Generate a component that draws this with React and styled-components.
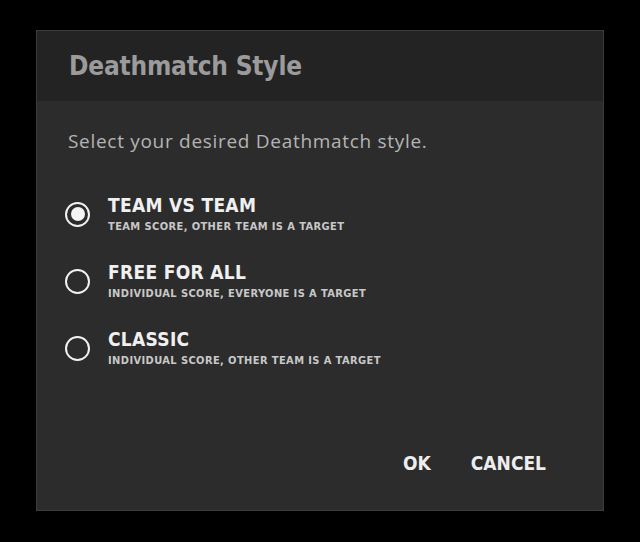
import React, { useState } from 'react';
import styled, { createGlobalStyle } from 'styled-components';

const GlobalStyle = createGlobalStyle`
    html, body {
        margin: 0;
        padding: 0;
        background: #000;
    }
    body {
        font-family: "Open Sans", "Liberation Sans", sans-serif;
    }
`;

const Page = styled.div`
    width: 640px;
    height: 542px;
    padding: 30px 36px 0;
    box-sizing: border-box;
`;

const Dialog = styled.div`
    width: 568px;
    height: 481px;
    box-sizing: border-box;
    border: 1px solid #3c3c3c;
    background: #2c2c2c;
    display: flex;
    flex-direction: column;
`;

const Header = styled.div`
    height: 70px;
    background: #232323;
    display: flex;
    align-items: center;
    padding-left: 32px;
`;

const Title = styled.h1`
    margin: 0;
    font-family: "DejaVu Sans Condensed", "DejaVu Sans", sans-serif;
    font-weight: bold;
    font-size: 26px;
    letter-spacing: -0.2px;
    color: #9b9b9b;
`;

const Body = styled.div`
    flex: 1;
    display: flex;
    flex-direction: column;
    padding: 27px 57px 0 28px;
`;

const Prompt = styled.p`
    margin: 0;
    padding-left: 3px;
    font-size: 19px;
    color: #b4b4b4;
    letter-spacing: 0.7px;
`;

const Options = styled.div`
    display: flex;
    flex-direction: column;
    gap: 28px;
    margin-top: 40px;
`;

const Option = styled.label`
    display: flex;
    align-items: center;
    gap: 18px;
    cursor: pointer;
`;

const Radio = styled.span`
    width: 25px;
    height: 25px;
    box-sizing: border-box;
    border-radius: 50%;
    border: 2.5px solid #f2f2f2;
    display: flex;
    align-items: center;
    justify-content: center;
    flex-shrink: 0;
    margin-top: 1px;

    &::after {
        content: '';
        width: 14px;
        height: 14px;
        border-radius: 50%;
        background: #f4f4f4;
        display: ${p => (p.$checked ? 'block' : 'none')};
    }
`;

const OptionText = styled.div`
    display: flex;
    flex-direction: column;
    gap: 4px;
`;

const OptionName = styled.span`
    font-family: "DejaVu Sans Condensed", "DejaVu Sans", sans-serif;
    font-weight: bold;
    font-size: 19px;
    letter-spacing: 0.3px;
    color: #f0f0f0;
    line-height: 22px;
`;

const OptionHint = styled.span`
    font-family: "DejaVu Sans Condensed", "DejaVu Sans", sans-serif;
    font-weight: bold;
    font-size: 11px;
    letter-spacing: 0.4px;
    color: #c8c8c8;
    line-height: 13px;
`;

const Actions = styled.div`
    margin-top: auto;
    margin-bottom: 36px;
    display: flex;
    justify-content: flex-end;
    gap: 40px;
`;

const ActionButton = styled.button`
    background: none;
    border: none;
    padding: 0;
    font-family: "DejaVu Sans Condensed", "DejaVu Sans", sans-serif;
    font-weight: bold;
    font-size: 19px;
    letter-spacing: 0;
    color: #ededed;
    cursor: pointer;
`;

const styles = [
    { name: 'TEAM VS TEAM', hint: 'TEAM SCORE, OTHER TEAM IS A TARGET' },
    { name: 'FREE FOR ALL', hint: 'INDIVIDUAL SCORE, EVERYONE IS A TARGET' },
    { name: 'CLASSIC', hint: 'INDIVIDUAL SCORE, OTHER TEAM IS A TARGET' },
];

const App = () => {
    const [selected, setSelected] = useState(0);

    return (
        <Page>
            <GlobalStyle />
            <Dialog>
                <Header>
                    <Title>Deathmatch Style</Title>
                </Header>
                <Body>
                    <Prompt>Select your desired Deathmatch style.</Prompt>
                    <Options>
                        {styles.map((s, i) => (
                            <Option key={s.name} onClick={() => setSelected(i)}>
                                <Radio $checked={selected === i} />
                                <OptionText>
                                    <OptionName>{s.name}</OptionName>
                                    <OptionHint>{s.hint}</OptionHint>
                                </OptionText>
                            </Option>
                        ))}
                    </Options>
                    <Actions>
                        <ActionButton>OK</ActionButton>
                        <ActionButton>CANCEL</ActionButton>
                    </Actions>
                </Body>
            </Dialog>
        </Page>
    );
};

export default App;
